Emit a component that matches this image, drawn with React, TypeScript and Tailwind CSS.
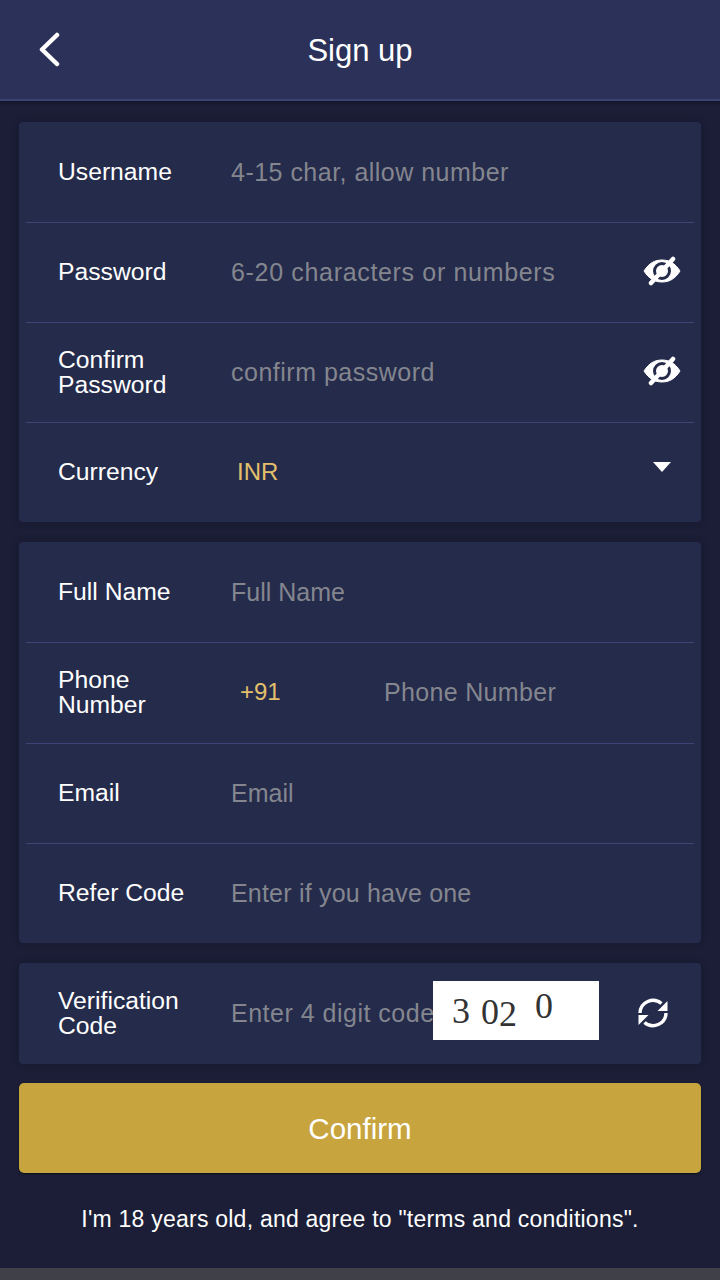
function Eye() {
  return (
    <svg width="38" height="30" viewBox="0 0 38 30" className="shrink-0">
      <path d="M1 15C6 7 12 4 19 4S32 7 37 15C32 23 26 26 19 26S6 23 1 15Z" fill="#fff" stroke="#fff" strokeLinejoin="round" />
      <circle cx="19" cy="15" r="7.500" fill="#fff" stroke="#252b4b" strokeWidth="3" />
      <path d="M8 27L30 3" stroke="#fff" strokeWidth="4.500" strokeLinecap="round" />
    </svg>
  );
}

function Refresh() {
  return (
    <svg width="32" height="32" viewBox="0 0 32 32" fill="none" className="shrink-0">
      <path d="M3 16A13 13 0 0 1 24.500 6.500" stroke="#fff" strokeWidth="3.400" />
      <path d="M29 16A13 13 0 0 1 7.500 25.500" stroke="#fff" strokeWidth="3.400" />
      <path d="M30.500 4V14H20.500Z" fill="#fff" />
      <path d="M1.500 28V18H11.500Z" fill="#fff" />
    </svg>
  );
}

function Row({ label, first, className, children }: { label: string; first?: boolean; className?: string; children: React.ReactNode }) {
  return (
    <div className={`flex items-center pl-[32px] pr-[14px] ${first ? "" : "border-t-[1.5px] border-[#3d4576]"} ${className ?? "h-[100px]"}`}>
      <div className="w-[130px] mr-[43px] -mt-[2px] shrink-0 text-[24.700px] leading-[25px] text-white">{label}</div>
      {children}
    </div>
  );
}

function Hint({ className, children }: { className?: string; children: React.ReactNode }) {
  return <span className={`text-[25px] text-[#84868f] whitespace-nowrap ${className ?? ""}`}>{children}</span>;
}

export default function App() {
  return (
    <div className="h-[1280px] w-[720px] overflow-hidden bg-[#1b1e36] font-['Liberation_Sans',Arial,sans-serif] flex flex-col">
      <header className="h-[101px] shrink-0 flex items-center justify-center relative bg-[#2b3158] border-b-2 border-[#3c4372] shadow-[0_2px_3px_#14172b]">
        <svg width="24" height="36" viewBox="0 0 24 36" fill="none" className="absolute left-[37px] top-[32px]">
          <path d="M20 3L5 17.500L20 32" stroke="#fff" strokeWidth="4.500" strokeLinecap="round" strokeLinejoin="round" />
        </svg>
        <h1 className="mt-[3px] text-[31px] font-normal text-white">Sign up</h1>
      </header>

      <main className="flex-1 px-[19px] pt-[21px] flex flex-col">
        <section className="bg-[#252b4b] rounded-[4px] px-[7px] shadow-[0_0_6px_#161930]">
          <Row label="Username" first>
            <Hint className="mt-[2px] tracking-[0.48px]">4-15 char, allow number</Hint>
          </Row>
          <Row label="Password">
            <Hint className="tracking-[0.67px]">6-20 characters or numbers</Hint>
            <div className="ml-auto -mr-[1px] -mt-[4px]"><Eye /></div>
          </Row>
          <Row label="Confirm Password">
            <Hint className="tracking-[0.5px]">confirm password</Hint>
            <div className="ml-auto -mr-[1px] -mt-[4px]"><Eye /></div>
          </Row>
          <Row label="Currency">
            <span className="ml-[6px] -mt-[2px] text-[24px] text-[#e2bf6b]">INR</span>
            <span className="ml-auto mr-[9px] -mt-[12px] w-0 h-0 border-x-[9px] border-x-transparent border-t-[10px] border-t-white" />
          </Row>
        </section>

        <section className="mt-[20px] bg-[#252b4b] rounded-[4px] px-[7px] shadow-[0_0_6px_#161930]">
          <Row label="Full Name" first>
            <Hint className="mt-[2px]">Full Name</Hint>
          </Row>
          <Row label="Phone Number" className="h-[101px]">
            <span className="w-[153px] pl-[9px] -mt-[2px] text-[24px] text-[#e2bf6b]">+91</span>
            <Hint className="tracking-[0.33px]">Phone Number</Hint>
          </Row>
          <Row label="Email">
            <Hint>Email</Hint>
          </Row>
          <Row label="Refer Code">
            <Hint className="tracking-[0.2px]">Enter if you have one</Hint>
          </Row>
        </section>

        <section className="mt-[20px] bg-[#252b4b] rounded-[4px] px-[7px] shadow-[0_0_6px_#161930]">
          <Row label="Verification Code" first className="h-[101px]">
            <div className="w-[202px] shrink-0">
              <Hint className="tracking-[0.5px]">Enter 4 digit code</Hint>
            </div>
            <div className="w-[166px] h-[59px] -mt-[6px] shrink-0 bg-white flex items-center pl-[19px] font-['Liberation_Serif',serif] text-[36px] leading-none text-[#333]">
              <span>3</span>
              <span className="ml-[11px] mt-[3px]">0</span>
              <span className="mt-[7px]">2</span>
              <span className="ml-[18px] -mt-[9px]">0</span>
            </div>
            <div className="ml-auto mr-[11px] -mt-[2px]"><Refresh /></div>
          </Row>
        </section>

        <button className="mt-[19px] h-[90px] pt-[2px] shrink-0 rounded-[5px] bg-[#c7a43e] text-[29.500px] text-white shadow-[0_1px_2px_#0c0e1c]">Confirm</button>

        <p className="mt-[32px] text-center text-[23px] tracking-[0.23px] leading-[28px] text-white">I'm 18 years old, and agree to "terms and conditions".</p>
      </main>

      <div className="h-[12px] shrink-0 bg-[#3f4048]" />
    </div>
  );
}
